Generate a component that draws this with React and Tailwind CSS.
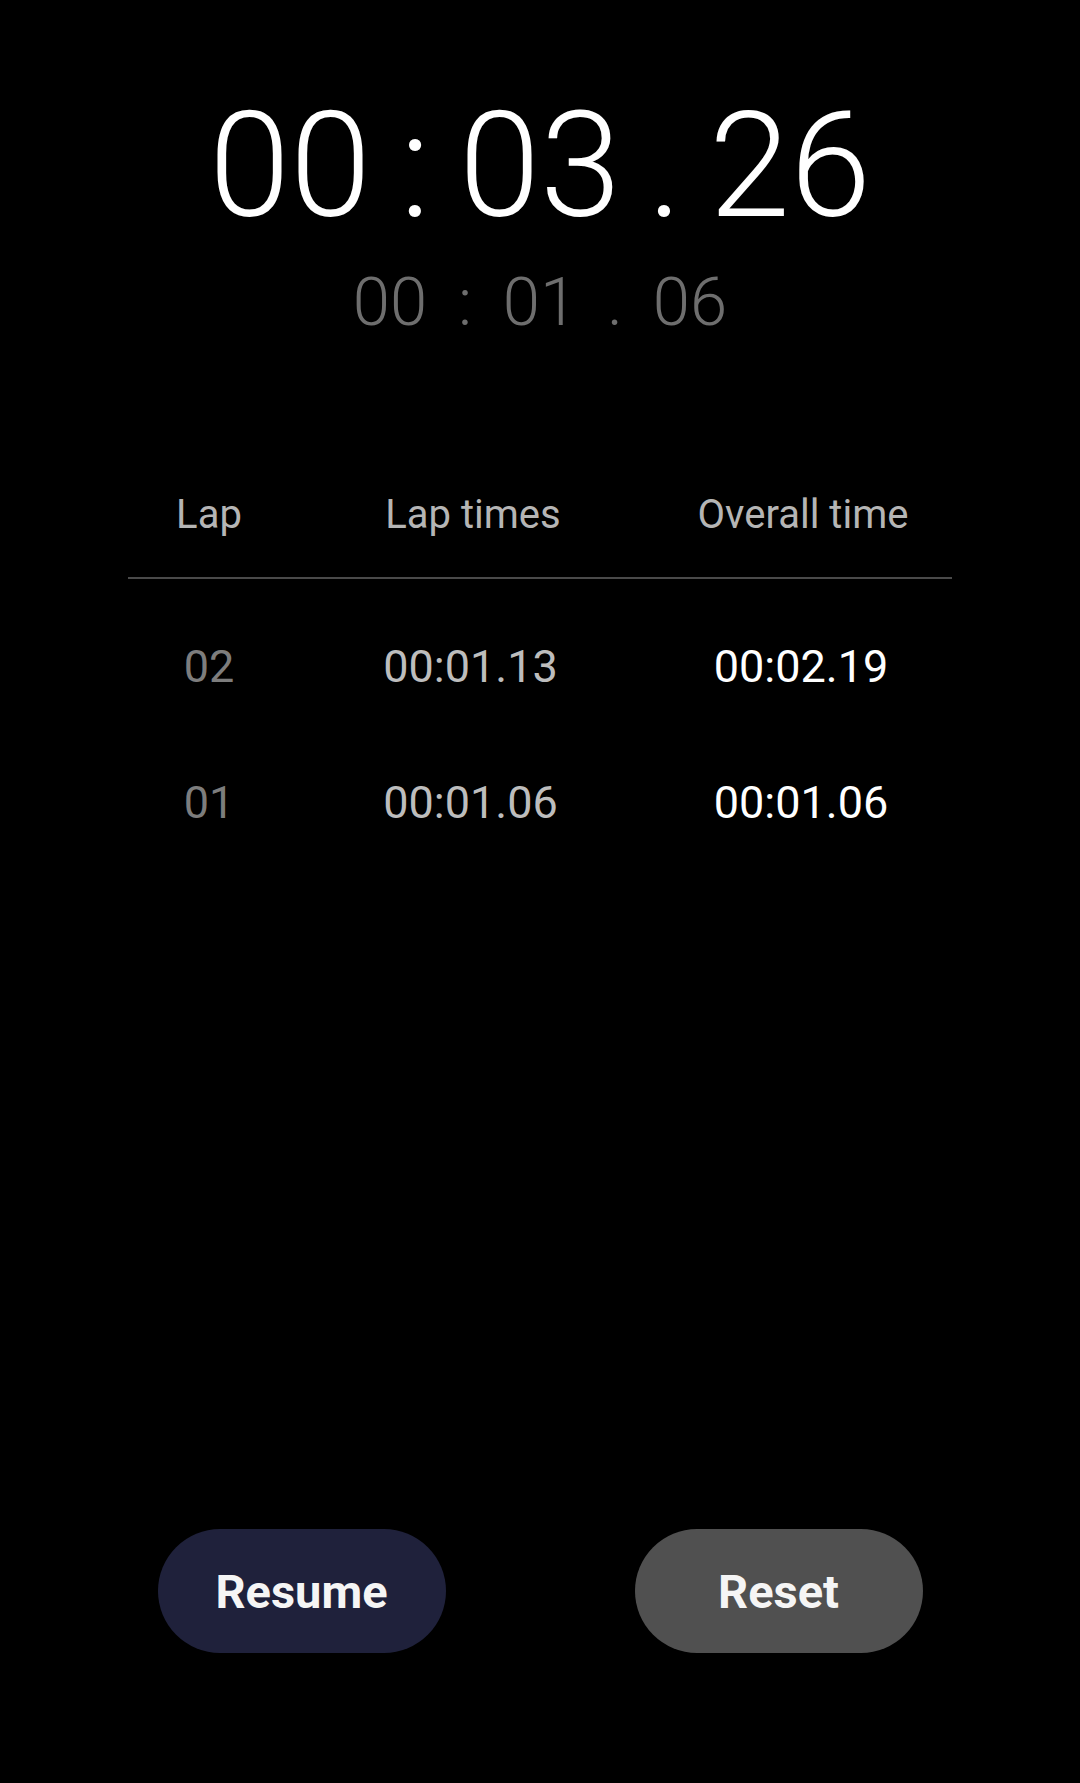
import React from "react";

const font = { fontFamily: 'Roboto, "Noto Sans", sans-serif' };

function BigTime() {
  return (
    <div className="flex justify-center text-white font-light text-[146px] leading-none mt-[94px]">
      <span className="w-[164px] text-center">00</span>
      <span className="w-[86px] text-center">:</span>
      <span className="w-[164px] text-center">03</span>
      <span className="w-[86px] text-center">.</span>
      <span className="w-[164px] text-center">26</span>
    </div>
  );
}

function SmallTime() {
  return (
    <div className="flex justify-center text-[#6e6e6e] font-light text-[67px] leading-none mt-[29px]">
      <span className="w-[75px] text-center">00</span>
      <span className="w-[75px] text-center">:</span>
      <span className="w-[75px] text-center">01</span>
      <span className="w-[75px] text-center">.</span>
      <span className="w-[75px] text-center">06</span>
    </div>
  );
}

const laps = [
  { n: "02", lap: "00:01.13", total: "00:02.19" },
  { n: "01", lap: "00:01.06", total: "00:01.06" },
];

export default function App() {
  return (
    <div
      className="w-[1080px] min-h-[1783px] bg-black flex flex-col"
      style={font}
    >
      <BigTime />
      <SmallTime />

      <div className="w-[824px] mx-auto mt-[159px]">
        <div className="grid grid-cols-[162px_366px_296px] text-[40px] leading-none text-[#b5b5b5] text-center">
          <div>Lap</div>
          <div>Lap times</div>
          <div className="pr-[2px]">Overall time</div>
        </div>
        <div className="h-[2px] bg-[#4a4a4a] mt-[42px]" />
        <div className="flex flex-col gap-[91px] mt-[65px]">
          {laps.map((l) => (
            <div
              key={l.n}
              className="grid grid-cols-[162px_366px_296px] text-[45px] leading-none text-center"
            >
              <div className="text-[#7d7d7d]">{l.n}</div>
              <div className="text-[#bdbdbd] pr-[5px]">{l.lap}</div>
              <div className="text-white pr-[6px]">{l.total}</div>
            </div>
          ))}
        </div>
      </div>

      <div className="flex-1" />

      <div className="flex justify-center gap-[189px] pb-[130px]">
        <button className="w-[288px] h-[124px] rounded-full bg-[#1f213b] text-[#f5f5f5] text-[47px] font-bold leading-none">
          Resume
        </button>
        <button className="w-[288px] h-[124px] rounded-full bg-[#505050] text-[#f5f5f5] text-[47px] font-bold leading-none">
          Reset
        </button>
      </div>
    </div>
  );
}
